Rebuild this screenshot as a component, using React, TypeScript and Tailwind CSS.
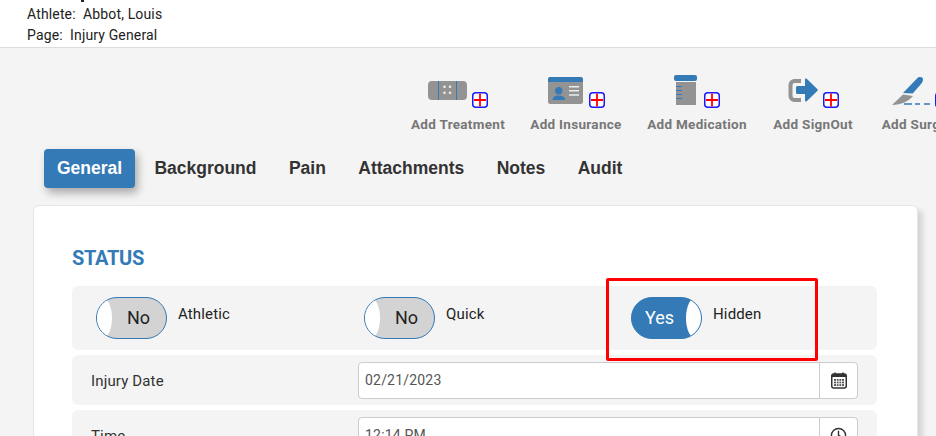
import { ReactNode } from "react";
import { Clock } from "lucide-react";

const BLUE = "#337ab7";
const GRAY = "#939393";

function PlusBox() {
  return (
    <svg width="16" height="33" viewBox="0 0 16 33" className="shrink-0">
      <rect x="0.75" y="17.75" width="14.5" height="14.5" rx="3" fill="#fff" stroke="#1a1aff" strokeWidth="1.5" />
      <path d="M8 18.500v13M2 25h12" stroke="#f00" strokeWidth="1.800" />
    </svg>
  );
}

function ToolItem({ label, icon, className }: { label: string; icon: ReactNode; className: string }) {
  return (
    <div className={`flex shrink-0 flex-col items-center ${className}`}>
      <div className="flex h-[33px] gap-[5px]">
        {icon}
        <PlusBox />
      </div>
      <span className="mt-[7px] text-[13.5px] leading-[18px] font-bold tracking-[0.3px] whitespace-nowrap text-[#777]">
        {label}
      </span>
    </div>
  );
}

const treatmentIcon = (
  <svg width="39" height="33" viewBox="0 0 39 33">
    <rect x="0" y="6" width="39" height="19" rx="4" fill={GRAY} />
    <path d="M10.5 6v19M28.500 6v19" stroke={BLUE} strokeWidth="1" />
    <g fill="#eee">
      <circle cx="16.500" cy="11.800" r="1.300" />
      <circle cx="22" cy="11.800" r="1.300" />
      <circle cx="16.500" cy="17.800" r="1.300" />
      <circle cx="22" cy="17.800" r="1.300" />
    </g>
  </svg>
);

const insuranceIcon = (
  <svg width="36" height="33" viewBox="0 0 36 33">
    <rect x="0" y="2" width="35" height="27" rx="2.500" fill={GRAY} />
    <path d="M0 7V4.500A2.500 2.500 0 0 1 2.500 2h30A2.500 2.500 0 0 1 35 4.500V7z" fill={BLUE} />
    <circle cx="10.700" cy="15.700" r="3.700" fill={BLUE} />
    <path d="M4.700 25c0-3.500 3-4.500 6-4.500s6.300 1 6.300 4.500z" fill={BLUE} />
    <path d="M21 11.700h10M21 15.700h10M21 20h10" stroke="#eee" strokeWidth="1.600" />
  </svg>
);

const medicationIcon = (
  <svg width="25" height="33" viewBox="0 0 25 33">
    <rect x="0" y="0" width="23" height="6" rx="2" fill={BLUE} />
    <rect x="2" y="7" width="20" height="23" fill={GRAY} />
    <path d="M2 11.500h6M2 15.500h6M2 19.500h6M2 23.500h6" stroke={BLUE} strokeWidth="1" />
  </svg>
);

const signOutIcon = (
  <svg width="30" height="33" viewBox="0 0 30 33">
    <path d="M13 6H6.500a4 4 0 0 0-4 4v11a4 4 0 0 0 4 4H13" fill="none" stroke={GRAY} strokeWidth="4" />
    <path d="M9.500 11H17V4.500a1 1 0 0 1 1.700-.7L29.500 14.300a1 1 0 0 1 0 1.400L18.700 26.200a1 1 0 0 1-1.700-.7V19H9.500A1.500 1.500 0 0 1 8 17.500v-5A1.500 1.500 0 0 1 9.500 11z" fill={BLUE} />
  </svg>
);

const surgeryIcon = (
  <svg width="39" height="33" viewBox="0 0 39 33">
    <path d="M12 18L26 3.500c2-2.200 6-1.700 6 1 0 1.500-.7 3-2 4.500L21.700 18.500z" fill={BLUE} />
    <path d="M1 30L12 19.500l10 1.500C18 26 10 30 1 30z" fill={GRAY} />
    <path d="M13 29h8M24 29h5M33 29h6" stroke={BLUE} strokeWidth="1.500" />
  </svg>
);

function Toggle({ on }: { on: boolean }) {
  return (
    <div
      className={`relative h-[42px] w-[71px] shrink-0 overflow-hidden rounded-[21px] border border-[#337ab7] ${
        on ? "bg-[#337ab7] text-white" : "bg-[#d3d3d3] text-[#222]"
      }`}
    >
      <span
        className={`absolute top-[-1px] h-[42px] w-[15px] bg-white ${
          on ? "right-0 rounded-l-[10px_21px]" : "left-0 rounded-r-[10px_21px]"
        }`}
      />
      <span
        className={`absolute top-[9px] text-[18px] leading-[22px] ${on ? "left-[13px]" : "left-[30px]"}`}
      >
        {on ? "Yes" : "No"}
      </span>
    </div>
  );
}

function ToggleField({ on, label, className }: { on: boolean; label: string; className: string }) {
  return (
    <div className={`flex gap-[11px] ${className}`}>
      <Toggle on={on} />
      <span className="mt-[7px] text-[15px] leading-5 tracking-[0.15px] text-[#222]">{label}</span>
    </div>
  );
}

function InputRow({ label, value, addon }: { label: string; value: string; addon: ReactNode }) {
  return (
    <div className="flex h-[50px] items-center rounded-md bg-[#f4f4f4] pl-[19px]">
      <span className="mt-[2px] w-[267px] text-[15px] tracking-[0.15px] text-[#333]">{label}</span>
      <div className="flex h-[37px] w-[500px] overflow-hidden rounded border border-[#ccc] bg-white">
        <span className="flex-1 px-[6px] text-[14px] leading-[35px] tracking-[0.2px] text-[#555]">{value}</span>
        <span className="flex w-[38px] items-center justify-center border-l border-[#ccc]">{addon}</span>
      </div>
    </div>
  );
}

const calendarIcon = (
  <svg width="16" height="17" viewBox="0 0 16 17">
    <path d="M4 0.500v2M12 0.500v2" stroke="#333" strokeWidth="1.500" />
    <rect x="0.750" y="2" width="14.500" height="14" rx="2" fill="none" stroke="#333" strokeWidth="1.500" />
    <rect x="1" y="2" width="14" height="3" fill="#333" />
    <path d="M3 7h10v7H3z" fill="#555" />
    <path d="M5.500 7v7M8 7v7M10.500 7v7M3 9.300h10M3 11.700h10" stroke="#fff" strokeWidth="0.800" />
  </svg>
);

export default function App() {
  return (
    <div className="relative h-[436px] w-[936px] overflow-hidden bg-[#f4f4f4] font-['Roboto',sans-serif]">
      <header className="relative h-[48px] border-b border-[#ddd] bg-white pt-[4px] pl-[27px] text-[14px] leading-[21px] tracking-[0.15px] text-[#222]">
        <span className="absolute top-0 left-[81px] h-[2px] w-[3px] bg-[#222]" />
        <p>Athlete:&nbsp; Abbot, Louis</p>
        <p>Page:&nbsp; Injury General</p>
      </header>

      {/* add buttons */}
      <div className="mt-[27px] flex gap-[26px] pl-[412px]">
        <ToolItem label="Add Treatment" icon={treatmentIcon} className="w-[92px]" />
        <ToolItem label="Add Insurance" icon={insuranceIcon} className="w-[92px]" />
        <ToolItem label="Add Medication" icon={medicationIcon} className="w-[98px]" />
        <ToolItem label="Add SignOut" icon={signOutIcon} className="w-[82px]" />
        <ToolItem label="Add Surgery" icon={surgeryIcon} className="w-[82px]" />
      </div>

      {/* tabs */}
      <nav className="mt-[16px] ml-[44px] flex h-[39px] items-center gap-[6.4px] font-['Liberation_Sans',sans-serif] text-[17.5px] font-bold text-[#333]">
        <span className="w-[91px] rounded bg-[#337ab7] text-center leading-[39px] text-white shadow-[3px_5px_8px_rgba(0,0,0,0.3)]">
          General
        </span>
        <span className="px-[13px]">Background</span>
        <span className="px-[13px]">Pain</span>
        <span className="px-[13px]">Attachments</span>
        <span className="px-[13px]">Notes</span>
        <span className="px-[13px]">Audit</span>
      </nav>

      {/* card */}
      <main className="mt-[17px] ml-[33px] h-[300px] w-[885px] rounded-md border border-[#e6e6e6] bg-white pt-[40px] pr-[40px] pl-[38px] shadow-[6px_4px_5px_-1px_rgba(0,0,0,0.12)]">
        <h2 className="text-[20px] leading-6 font-bold tracking-[-0.3px] text-[#337ab7]">STATUS</h2>
        <div className="mt-[16px] flex flex-col gap-[5px]">
          <div className="flex h-[64px] rounded-md bg-[#f4f4f4] pt-[11px] pl-[24px]">
            <ToggleField on={false} label="Athletic" className="w-[268px]" />
            <ToggleField on={false} label="Quick" className="w-[267px]" />
            <ToggleField on label="Hidden" className="" />
          </div>
          <InputRow label="Injury Date" value="02/21/2023" addon={calendarIcon} />
          <InputRow label="Time" value="12:14 PM" addon={<Clock size={17} strokeWidth={2} color="#333" />} />
        </div>
      </main>

      {/* annotation */}
      <div className="absolute top-[278px] left-[606px] h-[83px] w-[212px] rounded-[2px] border-[3px] border-[#f00]" />
    </div>
  );
}
